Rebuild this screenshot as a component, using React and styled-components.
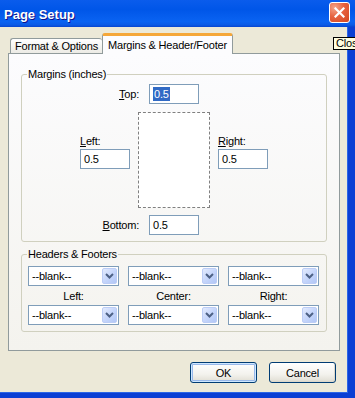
import React from 'react';
import styled, { createGlobalStyle } from 'styled-components';

const GlobalStyle = createGlobalStyle`
  html, body {
    margin: 0;
    padding: 0;
    background: #fff;
  }
  body {
    font-family: "Liberation Sans", Arial, sans-serif;
    font-size: 11px;
    letter-spacing: -0.2px;
    color: #000;
  }
  * {
    box-sizing: border-box;
  }
`;

const Window = styled.div`
  position: relative;
  width: 355px;
  height: 398px;
  overflow: hidden;
  display: flex;
  flex-direction: column;
`;

const TitleBar = styled.div`
  flex: none;
  height: 27px;
  display: flex;
  align-items: flex-start;
  justify-content: space-between;
  padding: 2px 4px 0 4px;
  background: linear-gradient(180deg, #0a5cec 0%, #0056e8 35%, #0a63f2 80%, #0b5be6 92%, #0845cf 100%);
`;

const Title = styled.div`
  margin-top: 5px;
  color: #fff;
  font-weight: bold;
  font-size: 13px;
  letter-spacing: 0;
  text-shadow: 1px 1px #0f1089;
`;

const CloseButton = styled.div`
  width: 21px;
  height: 21px;
  margin-right: 1px;
  border: 1px solid #fff;
  border-radius: 3px;
  background: radial-gradient(circle at 25% 25%, #f6a58a 0%, #e6623f 45%, #d4461f 100%);
  display: flex;
  align-items: center;
  justify-content: center;
`;

const Frame = styled.div`
  flex: 1;
  display: flex;
  flex-direction: column;
  padding: 6px 8px 0 8px;
  background: #ece9d8;
  border-right: 7px solid #0b3fd4;
  border-bottom: 5px solid #0b3fd4;
  box-shadow: inset -1px -1px 0 #2c66e6;
`;

const TabStrip = styled.div`
  height: 20px;
  display: flex;
  align-items: flex-end;
  padding-left: 2px;
  position: relative;
  z-index: 1;
`;

const Tab = styled.div`
  display: flex;
  align-items: center;
  white-space: nowrap;
  border: 1px solid #919b9c;
  border-bottom: none;
  border-radius: 3px 3px 0 0;
  ${(p) =>
    p.$active
      ? `
    height: 21px;
    margin-bottom: -1px;
    padding: 0 5px 0 5px;
    border-top: 3px solid #f5a739;
    background: #fcfcfe;
  `
      : `
    height: 15px;
    padding: 0 4px 0 4px;
    border-right: none;
    background: linear-gradient(180deg, #ffffff, #ecebe5);
  `}
`;

const Panel = styled.div`
  height: 298px;
  border: 1px solid #919b9c;
  background: linear-gradient(180deg, #fcfcfe, #f4f3ee);
  padding: 14px 12px 0 12px;
  display: flex;
  flex-direction: column;
`;

const GroupBox = styled.fieldset`
  margin: ${(p) => (p.$spaced ? '6px 0 0 0' : '0')};
  padding: ${(p) => p.$pad};
  min-width: 0;
  border: 1px solid #d0d0bf;
  border-radius: 3px;
`;

const Legend = styled.legend`
  margin-left: 5px;
  padding: 0 1px;
  line-height: 13px;
`;

const EdgeRow = styled.div`
  display: grid;
  grid-template-columns: 1fr 50px 1fr;
  align-items: center;
  margin-top: ${(p) => p.$gap || 0}px;
`;

const EdgeLabel = styled.span`
  justify-self: end;
  margin-right: 10px;
`;

const MiddleRow = styled.div`
  display: grid;
  grid-template-columns: 1fr 72px 1fr;
  column-gap: 8px;
  margin-top: 8px;
`;

const SideColumn = styled.div`
  justify-self: ${(p) => p.$align};
  display: flex;
  flex-direction: column;
  gap: 2px;
  margin-top: 23px;
`;

const Preview = styled.div`
  height: 96px;
  border: 1px dashed #808080;
  background: #fff;
`;

const Field = styled.div`
  width: 50px;
  height: 20px;
  border: 1px solid #7f9db9;
  background: #fff;
  padding-left: 3px;
  display: flex;
  align-items: center;
`;

const Selected = styled.span`
  background: #316ac5;
  color: #fff;
  padding: 0 1px;
  line-height: 14px;
`;

const HeaderGrid = styled.div`
  display: grid;
  grid-template-columns: repeat(3, 1fr);
  grid-template-rows: 20px 19px 20px;
  column-gap: 9px;
  padding: 0 7px 0 6px;
`;

const PositionLabel = styled.span`
  align-self: center;
  text-align: center;
`;

const Combo = styled.div`
  height: 20px;
  border: 1px solid #7f9db9;
  background: #fff;
  padding: 0 1px 0 3px;
  display: flex;
  align-items: center;
  justify-content: space-between;
`;

const ComboButton = styled.div`
  width: 15px;
  height: 16px;
  border: 1px solid #bccdf6;
  border-radius: 2px;
  background: linear-gradient(135deg, #e3ebfe 0%, #c6d6fb 50%, #b2c7f6 100%);
  display: flex;
  align-items: center;
  justify-content: center;
`;

const ButtonRow = styled.div`
  display: flex;
  justify-content: flex-end;
  gap: 12px;
  margin-top: 11px;
  padding-right: 4px;
`;

const Button = styled.div`
  width: 67px;
  height: 21px;
  border: 1px solid #003c74;
  border-radius: 3px;
  background: linear-gradient(180deg, #ffffff 0%, #f3f2ed 60%, #e4e2d9 90%, #d6d0c5 100%);
  display: flex;
  align-items: center;
  justify-content: center;
  box-shadow: ${(p) =>
    p.$default
      ? 'inset 0 0 0 1px #cee7ff, inset 0 0 0 2px #98b8ea'
      : 'inset -1px -1px 0 #dcd8cc'};
`;

const Tooltip = styled.div`
  position: absolute;
  left: 333px;
  top: 37px;
  height: 13px;
  padding: 0 2px;
  border: 1px solid #000;
  background: #ffffe1;
  line-height: 11px;
  white-space: nowrap;
`;

const Chevron = () => (
  <svg width="9" height="6" viewBox="0 0 9 6">
    <path d="M1 1 L4.5 4.5 L8 1" fill="none" stroke="#4d6185" strokeWidth="2" />
  </svg>
);

const CrossIcon = () => (
  <svg width="11" height="11" viewBox="0 0 11 11">
    <path d="M1.5 1.5 L9.5 9.5 M9.5 1.5 L1.5 9.5" stroke="#fff" strokeWidth="2.2" strokeLinecap="square" />
  </svg>
);

const Dropdown = () => (
  <Combo>
    <span>--blank--</span>
    <ComboButton>
      <Chevron />
    </ComboButton>
  </Combo>
);

const App = () => {
  return (
    <Window>
      <GlobalStyle />
      <TitleBar>
        <Title>Page Setup</Title>
        <CloseButton>
          <CrossIcon />
        </CloseButton>
      </TitleBar>
      <Frame>
        <TabStrip>
          <Tab>Format &amp; Options</Tab>
          <Tab $active>Margins &amp; Header/Footer</Tab>
        </TabStrip>
        <Panel>
          <GroupBox $pad="3px 0 6px 0">
            <Legend>Margins (inches)</Legend>
            <EdgeRow>
              <EdgeLabel>
                <u>T</u>op:
              </EdgeLabel>
              <Field>
                <Selected>0.5</Selected>
              </Field>
            </EdgeRow>
            <MiddleRow>
              <SideColumn $align="end">
                <span>
                  <u>L</u>eft:
                </span>
                <Field>0.5</Field>
              </SideColumn>
              <Preview />
              <SideColumn $align="start">
                <span>
                  <u>R</u>ight:
                </span>
                <Field>0.5</Field>
              </SideColumn>
            </MiddleRow>
            <EdgeRow $gap={7}>
              <EdgeLabel>
                <u>B</u>ottom:
              </EdgeLabel>
              <Field>0.5</Field>
            </EdgeRow>
          </GroupBox>
          <GroupBox $spaced $pad="5px 0 6px 0">
            <Legend>Headers &amp; Footers</Legend>
            <HeaderGrid>
              <Dropdown />
              <Dropdown />
              <Dropdown />
              <PositionLabel>Left:</PositionLabel>
              <PositionLabel>Center:</PositionLabel>
              <PositionLabel>Right:</PositionLabel>
              <Dropdown />
              <Dropdown />
              <Dropdown />
            </HeaderGrid>
          </GroupBox>
        </Panel>
        <ButtonRow>
          <Button $default>OK</Button>
          <Button>Cancel</Button>
        </ButtonRow>
      </Frame>
      <Tooltip>Close</Tooltip>
    </Window>
  );
};

export default App;
